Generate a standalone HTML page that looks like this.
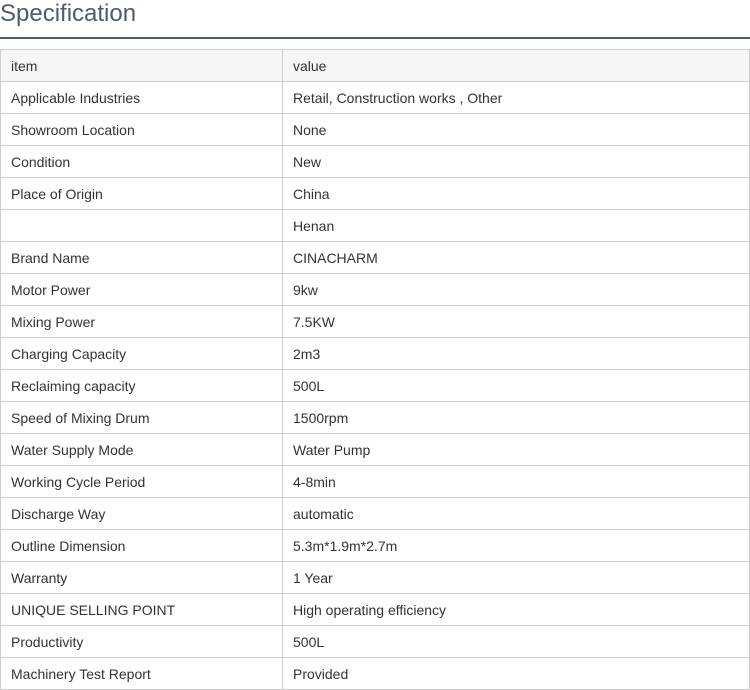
<!DOCTYPE html>
<html><head><style>
body{margin:0;background:#fff;font-family:"Liberation Sans",sans-serif;width:750px;height:690px;overflow:hidden}
h2{margin:0;position:absolute;left:0;top:0;font-weight:normal;font-size:24px;line-height:28px;color:#4f5b6c}
.line{position:absolute;left:0;top:37px;width:750px;height:2px;background:#505a6b}
table{position:absolute;left:0;top:49px;border-collapse:collapse;width:750px;table-layout:fixed}
td{border:1px solid #cfcfcf;height:32px;padding:0 0 0 10px;font-size:14px;color:#333;box-sizing:border-box}
tr:first-child td{background:#f5f6f8}
</style></head><body>
<h2>Specification</h2><div class="line"></div>
<table>
<colgroup><col style="width:282px"><col></colgroup>
<tr><td>item</td><td>value</td></tr>
<tr><td>Applicable Industries</td><td>Retail, Construction works , Other</td></tr>
<tr><td>Showroom Location</td><td>None</td></tr>
<tr><td>Condition</td><td>New</td></tr>
<tr><td>Place of Origin</td><td>China</td></tr>
<tr><td></td><td>Henan</td></tr>
<tr><td>Brand Name</td><td>CINACHARM</td></tr>
<tr><td>Motor Power</td><td>9kw</td></tr>
<tr><td>Mixing Power</td><td>7.5KW</td></tr>
<tr><td>Charging Capacity</td><td>2m3</td></tr>
<tr><td>Reclaiming capacity</td><td>500L</td></tr>
<tr><td>Speed of Mixing Drum</td><td>1500rpm</td></tr>
<tr><td>Water Supply Mode</td><td>Water Pump</td></tr>
<tr><td>Working Cycle Period</td><td>4-8min</td></tr>
<tr><td>Discharge Way</td><td>automatic</td></tr>
<tr><td>Outline Dimension</td><td>5.3m*1.9m*2.7m</td></tr>
<tr><td>Warranty</td><td>1 Year</td></tr>
<tr><td>UNIQUE SELLING POINT</td><td>High operating efficiency</td></tr>
<tr><td>Productivity</td><td>500L</td></tr>
<tr><td>Machinery Test Report</td><td>Provided</td></tr>
</table>
</body></html>
